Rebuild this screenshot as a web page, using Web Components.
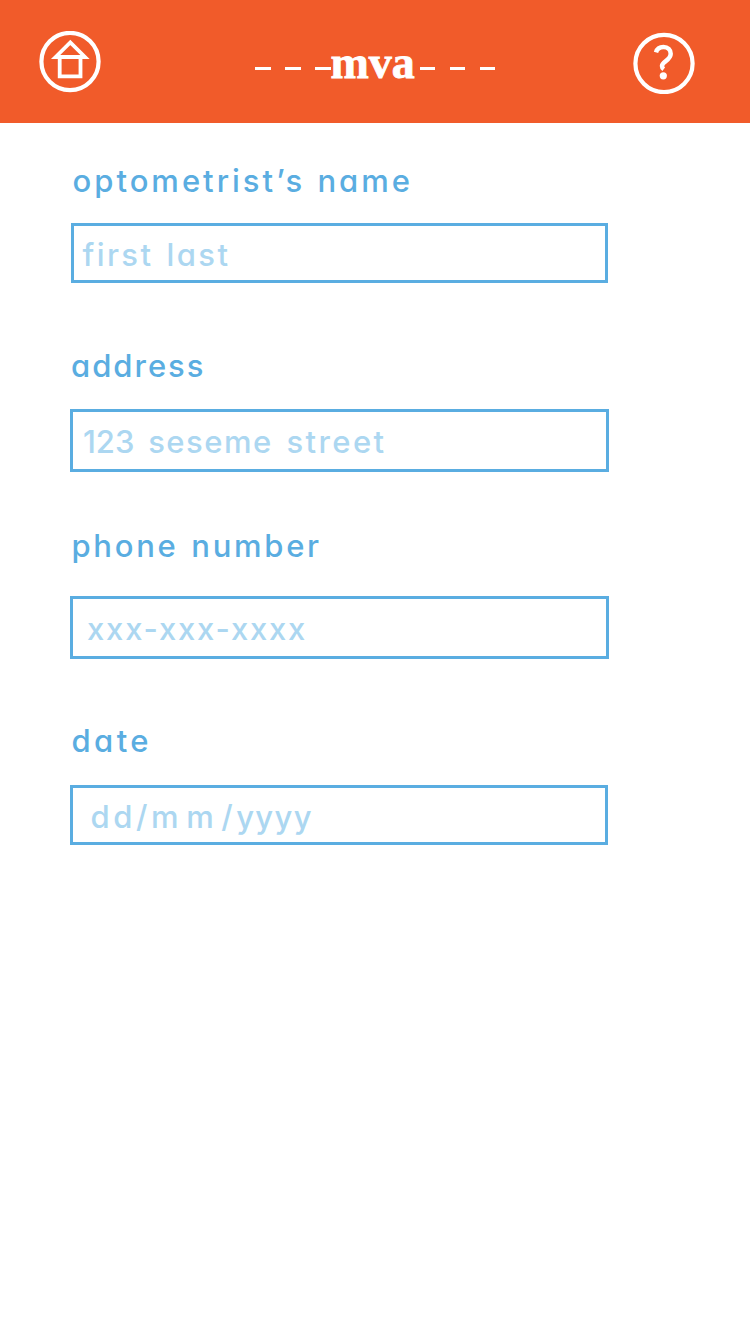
<!DOCTYPE html>
<html lang="en">
<head>
<meta charset="utf-8">
<title>mva</title>
<style>
body{margin:0;background:#fff;font-family:Inter,"Liberation Sans",sans-serif}
</style>
</head>
<body>
<mva-page>
  <mva-header slot="header">mva</mva-header>
  <mva-field style="--gap:38px;--inset:2.5px;--ls:3px;--ws:1px;--box-gap:22px;--box-left:1px;--w:537px;--h:60px;--pt:9px;--pl:8.5px;--pls:2.4px;--pws:2.5px"><span slot="label">optometrist’s name</span>first last</mva-field>
  <mva-field style="--gap:63px;--inset:1px;--ls:2px;--box-gap:23px;--w:539px;--h:63px;--pt:10px;--pl:10px;--pls:1.5px;--pws:4px"><span slot="label">address</span><span style="letter-spacing:0">123</span> seseme <span style="letter-spacing:2.4px">street</span></mva-field>
  <mva-field style="--gap:54px;--inset:1.5px;--ls:2.7px;--ws:2px;--box-gap:30px;--w:539px;--h:63px;--pt:10px;--pl:14px;--pls:1.8px"><span slot="label">phone number</span>xxx-xxx-xxxx</mva-field>
  <mva-field style="--gap:62px;--inset:1.5px;--ls:3.4px;--box-gap:24px;--w:538px;--h:60px;--pt:9px;--pl:17.5px;--pls:3.6px"><span slot="label">date</span>dd/<span style="letter-spacing:7.5px">mm</span>/<span style="letter-spacing:1.3px">yyyy</span></mva-field>
</mva-page>
<script>
const define = (name, html) => customElements.define(name, class extends HTMLElement {
  constructor() {
    super();
    this.attachShadow({mode: 'open'}).innerHTML = html;
  }
});

define('mva-icon-home', `
<style>:host{display:block;width:62px;height:62px}svg{display:block}</style>
<svg width="62" height="62" viewBox="0 0 62 62" fill="none" stroke="#fff">
  <circle cx="31" cy="30.5" r="28.600" stroke-width="4.200"/>
  <path d="M16.600 26 31.300 11.500 46 26Z" stroke-width="3.800"/>
  <path d="M20.700 27V45.400H41.500V27" stroke-width="3.800"/>
</svg>`);

define('mva-icon-help', `
<style>:host{display:block;width:62px;height:62px}svg{display:block}</style>
<svg width="62" height="62" viewBox="0 0 62 62" fill="none" stroke="#fff">
  <circle cx="31" cy="31.500" r="28.600" stroke-width="4.200"/>
  <path d="M23 20.300C24 16.800 27 15 30.500 15c4.300 0 7.200 2.800 7.200 6.800 0 6.800-8.700 7.400-8.700 12.200 0 1.400.6 2.400 1.700 3.200" stroke-width="4.500"/>
  <circle cx="30.300" cy="43.800" r="3.600" fill="#fff" stroke="none"/>
</svg>`);

define('mva-dashes', `
<style>:host{display:flex;gap:14.500px}i{width:15.500px;height:3px;background:#fff}</style>
<i></i><i></i><i></i>`);

define('mva-header', `
<style>
:host{display:flex;align-items:flex-start;height:123px;padding:0 55px 0 39px;box-sizing:border-box;background:#f15b2a;color:#fff}
mva-icon-home{margin-top:31px}
mva-icon-help{margin:32px 0 0 auto}
.brand{display:flex;align-items:center;margin:37px 0 0 154px;height:62px}
h1{font:bold 46px/62px "Liberation Serif",serif;-webkit-text-stroke:.8px #fff;margin:-11px 5px 0 0}
</style>
<mva-icon-home></mva-icon-home>
<div class="brand"><mva-dashes></mva-dashes><h1><slot></slot></h1><mva-dashes></mva-dashes></div>
<mva-icon-help></mva-icon-help>`);

define('mva-field', `
<style>
:host{display:block;padding-top:var(--gap);font-size:31px;font-weight:500;line-height:40px;font-feature-settings:"cv11" 1;white-space:nowrap}
.label{margin-left:var(--inset,0px);letter-spacing:var(--ls);word-spacing:var(--ws,0px);color:#5aade1;height:40px}
.box{margin:var(--box-gap) 0 0 var(--box-left,0px);width:var(--w);height:var(--h);box-sizing:border-box;border:3px solid #5aade1;padding:var(--pt) 0 0 var(--pl);color:#acd7f1;letter-spacing:var(--pls);word-spacing:var(--pws,0px)}
</style>
<div class="label"><slot name="label"></slot></div>
<div class="box"><slot></slot></div>`);

define('mva-page', `
<style>:host{display:block;min-height:1334px;background:#fff}main{padding-left:70px}</style>
<slot name="header"></slot>
<main><slot></slot></main>`);
</script>
</body>
</html>
